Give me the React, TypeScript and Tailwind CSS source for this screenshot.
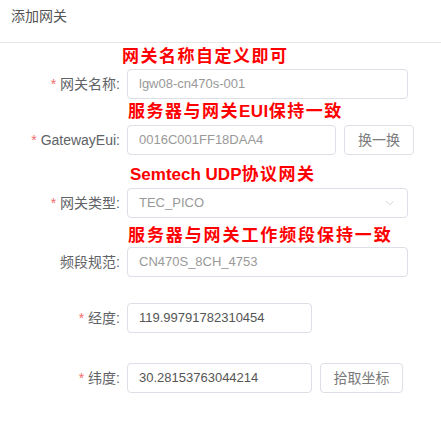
import { ChevronDown } from "lucide-react";

const font = { fontFamily: '"Liberation Sans", "Noto Sans CJK SC", sans-serif' };

function Note({ children, className = "" }: { children: React.ReactNode; className?: string }) {
    return (
        <div
            className={`h-[20px] leading-[20px] text-[17px] font-bold text-[#ff0000] tracking-[1.5px] whitespace-nowrap ${className}`}
        >
            {children}
        </div>
    );
}

function Label({ text, required = true }: { text: string; required?: boolean }) {
    return (
        <div className="w-[127px] shrink-0 pr-[7px] text-right text-[14px] text-[#606266] leading-[30px] whitespace-nowrap">
            {required && <span className="text-[#f56c6c] mr-[4px]">*</span>}
            {text}:
        </div>
    );
}

function Field({
    value,
    width,
    muted = true,
    select = false,
}: {
    value: string;
    width: string;
    muted?: boolean;
    select?: boolean;
}) {
    return (
        <div
            className={`${width} h-[30px] border border-[#dcdfe6] rounded-[4px] bg-white flex items-center justify-between pl-[11px] pr-[10px] text-[13px] ${
                muted ? "text-[#999]" : "text-[#555]"
            }`}
        >
            <span>{value}</span>
            {select && <ChevronDown size={14} strokeWidth={1.2} className="text-[#c0c4cc]" />}
        </div>
    );
}

function Btn({ text, width }: { text: string; width: string }) {
    return (
        <button className={`${width} h-[30px] ml-[8px] border border-[#dcdfe6] rounded-[4px] bg-white text-[14px] text-[#7a7a7a]`}>
            {text}
        </button>
    );
}

export default function App() {
    return (
        <div className="w-[441px] h-[444px] bg-white overflow-hidden" style={font}>
            {/* Header */}
            <div className="h-[43px] border-b border-[#e6e6e6] pt-[6px] pl-[11px]">
                <div className="text-[14px] leading-[20px] text-[#555]">添加网关</div>
            </div>

            <div className="flex flex-col">
                <Note className="mt-[4px] pl-[122px]">网关名称自定义即可</Note>
                <div className="flex mt-[2px]">
                    <Label text="网关名称" />
                    <Field value="lgw08-cn470s-001" width="w-[281px]" />
                </div>

                <Note className="mt-[3px] pl-[128px]">
                    服务器与网关<span className="tracking-[0.5px]">EUI</span>保持一致
                </Note>
                <div className="flex mt-[3px]">
                    <Label text="GatewayEui" />
                    <Field value="0016C001FF18DAA4" width="w-[209px]" />
                    <Btn text="换一换" width="w-[70px]" />
                </div>

                <Note className="mt-[10px] pl-[130px]">
                    <span className="tracking-normal">Semtech UDP</span>协议网关
                </Note>
                <div className="flex mt-[3px]">
                    <Label text="网关类型" />
                    <Field value="TEC_PICO" width="w-[281px]" select />
                </div>

                <Note className="mt-[8px] pl-[128px] tracking-[1.9px]">服务器与网关工作频段保持一致</Note>
                <div className="flex mt-[1px]">
                    <Label text="频段规范" required={false} />
                    <Field value="CN470S_8CH_4753" width="w-[281px]" />
                </div>

                <div className="flex mt-[26px]">
                    <Label text="经度" />
                    <Field value="119.99791782310454" width="w-[185px]" muted={false} />
                </div>

                <div className="flex mt-[30px]">
                    <Label text="纬度" />
                    <Field value="30.28153763044214" width="w-[185px]" muted={false} />
                    <Btn text="拾取坐标" width="w-[83px]" />
                </div>
            </div>
        </div>
    );
}
